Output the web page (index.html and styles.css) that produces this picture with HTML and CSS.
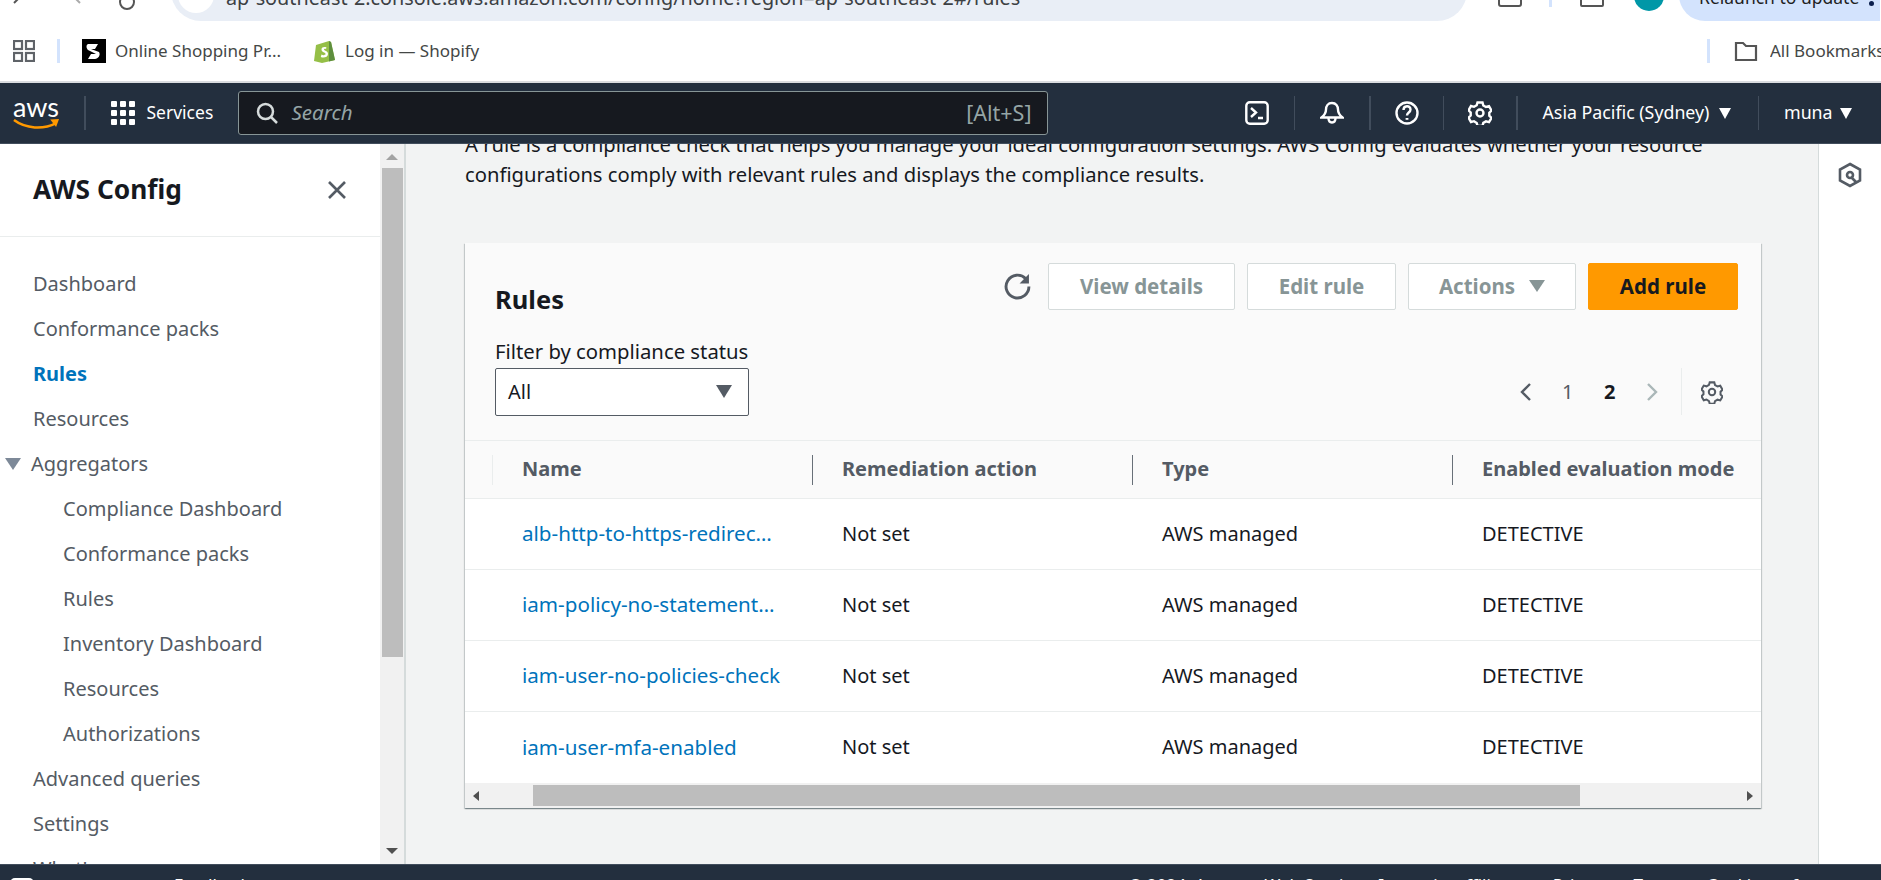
FILE: index.html
```html
<!DOCTYPE html>
<html lang="en">
<head>
<meta charset="utf-8">
<title>Rules | AWS Config</title>
<link rel="stylesheet" href="styles.css">
</head>
<body>
<div class="page">
  <div class="browser-top">
    <div class="tb-left">
      <svg class="tb-ic back" viewBox="0 0 20 20"><path d="M12 2 4 10"/></svg>
      <svg class="tb-ic fwd" viewBox="0 0 20 20"><path d="M8 2l8 8"/></svg>
      <svg class="tb-ic reload" viewBox="0 0 20 20"><circle cx="10" cy="6" r="7"/></svg>
    </div>
    <div class="url-bar">
      <span class="url-lock"></span>
      <span class="url-text">ap-southeast-2.console.aws.amazon.com/config/home?region=ap-southeast-2#/rules</span>
      <svg class="url-star" viewBox="0 0 20 20"><path d="M10 -6l3 8h8l-6 5 2 7-7-4-7 4 2-7-6-5h8z"/></svg>
    </div>
    <div class="tb-right">
      <span class="tb-box"></span>
      <span class="tb-sep"></span>
      <span class="tb-box dl"></span>
      <span class="avatar">m</span>
      <div class="update-pill"><span class="update-text">Relaunch to update</span><span class="dot"></span></div>
    </div>
  </div>

  <div class="bookmarks">
    <svg class="apps" viewBox="0 0 22 22"><rect x="1" y="1" width="8" height="8"/><rect x="13" y="1" width="8" height="8"/><rect x="1" y="13" width="8" height="8"/><rect x="13" y="13" width="8" height="8"/></svg>
    <span class="bm-sep"></span>
    <div class="bm bm-online">
      <svg class="fav" viewBox="0 0 24 24"><rect width="24" height="24" fill="#000"/><path d="M6 5h10l-3 5H9l8 3c2 3-1 7-4 7H6l3-5h5L6 11C4 9 4 6 6 5z" fill="#fff"/></svg>
      <span class="bm-label">Online Shopping Pr...</span>
    </div>
    <div class="bm">
      <svg class="fav shop" viewBox="0 0 22 24"><path d="M2 6 15 2l2 1 4 18-13 3-8-2z" fill="#95bf47"/><path d="M15 2l2 1 4 18-6 1.500z" fill="#5e8e3e"/><path d="M12.500 8.500c-2-1-5-.5-5 2 0 3 4 2.500 4 4.500 0 1.500-2.500 1.500-4 .5l-.7 2.500c2.500 1.300 7.200.5 7.200-3 0-3.300-4-3-4-4.500 0-1 1.300-1 2-.6z" fill="#fff"/></svg>
      <span class="bm-text">Log in — Shopify</span>
    </div>
    <span class="bm-spacer"></span>
    <span class="bm-sep"></span>
    <svg class="folder" viewBox="0 0 24 22"><path d="M2 3h7l3 3h10v14H2z"/></svg>
    <span class="bm all">All Bookmarks</span>
  </div>

  <header class="topnav">
    <div class="aws-logo">
      <span class="aws-word">aws</span>
      <svg class="aws-smile" viewBox="0 0 48 12"><path d="M1 2c12 9 30 10 43 3" fill="none" stroke="#f90" stroke-width="2.600"/><path d="M38 1.500l9-.5-3 8z" fill="#f90"/></svg>
    </div>
    <span class="nav-sep logo-sep"></span>
    <svg class="grid-ic" viewBox="0 0 24 24"><g fill="#fff"><rect width="6" height="6" rx="1"/><rect x="9" width="6" height="6" rx="1"/><rect x="18" width="6" height="6" rx="1"/><rect y="9" width="6" height="6" rx="1"/><rect x="9" y="9" width="6" height="6" rx="1"/><rect x="18" y="9" width="6" height="6" rx="1"/><rect y="18" width="6" height="6" rx="1"/><rect x="9" y="18" width="6" height="6" rx="1"/><rect x="18" y="18" width="6" height="6" rx="1"/></g></svg>
    <span class="services">Services</span>
    <div class="search">
      <svg class="search-ic" viewBox="0 0 22 22"><circle cx="9.500" cy="9.500" r="7.500"/><path d="m15 15 6 6"/></svg>
      <span class="search-ph">Search</span>
      <span class="search-key">[Alt+S]</span>
    </div>
    <svg class="nav-ic term" viewBox="0 0 24 24"><rect x="1.300" y="1.300" width="21.400" height="21.400" rx="3.500"/><path d="m6 7 5 4.500L6 16M13 17h5"/></svg>
    <span class="nav-sep s1"></span>
    <svg class="nav-ic bell" viewBox="0 0 24 24"><path d="M12 2c-4 0-6 3-6 6.500 0 3.500-2 6-4.500 8h21C20 14.500 18 12 18 8.500 18 5 16 2 12 2z"/><path d="M8.500 17c0 6 7 6 7 0"/></svg>
    <span class="nav-sep s2"></span>
    <svg class="nav-ic help" viewBox="0 0 24 24"><circle cx="12" cy="12" r="10.500"/><path d="M8.500 9c0-5 7-5 7-.5 0 3-3.500 3-3.500 6"/><path class="fat" d="M12 17v1.800"/></svg>
    <span class="nav-sep s3"></span>
    <svg class="nav-ic gear" viewBox="0 0 24 24"><circle cx="12" cy="12" r="3.500"/><path d="M9.500 1.500h5l.8 3 2.700 1.500 3-.8 2.500 4.300-2.200 2.200v3l2.200 2.200-2.500 4.300-3-.8-2.700 1.500-.8 3h-5l-.8-3L6 20.200l-3 .8L.500 16.700 2.700 14.500v-3L.500 9.300 3 5l3 .8 2.700-1.500z"/></svg>
    <span class="nav-sep s4"></span>
    <span class="region">Asia Pacific (Sydney)</span>
    <span class="tri white t1"></span>
    <span class="nav-sep s5"></span>
    <span class="user">muna</span>
    <span class="tri white t2"></span>
  </header>

  <div class="workspace">
    <aside class="side">
      <div class="side-scroll">
        <div class="side-head">
          <h2 class="side-title">AWS Config</h2>
          <svg class="close" viewBox="0 0 20 20"><path d="m2 2 16 16M18 2 2 18"/></svg>
        </div>
        <nav class="side-nav">
          <a class="item">Dashboard</a>
          <a class="item">Conformance packs</a>
          <a class="item active">Rules</a>
          <a class="item">Resources</a>
          <a class="item group"><span class="tri grey"></span>Aggregators</a>
          <a class="item sub">Compliance Dashboard</a>
          <a class="item sub">Conformance packs</a>
          <a class="item sub">Rules</a>
          <a class="item sub">Inventory Dashboard</a>
          <a class="item sub">Resources</a>
          <a class="item sub">Authorizations</a>
          <a class="item">Advanced queries</a>
          <a class="item">Settings</a>
          <a class="item">What's new</a>
        </nav>
      </div>
      <div class="vscroll">
        <span class="arrow up"></span>
        <span class="vthumb"></span>
        <span class="arrow down"></span>
      </div>
    </aside>

    <main class="main">
      <p class="intro">A rule is a compliance check that helps you manage your ideal configuration settings. AWS Config evaluates whether your resource configurations comply with relevant rules and displays the compliance results.</p>

      <section class="card">
        <div class="card-head">
          <div class="head-row">
            <h2 class="card-title">Rules</h2>
            <div class="actions">
              <svg class="refresh" viewBox="0 0 26 26"><path d="M21 5.500A11 11 0 1 0 24 13"/><path class="fill" d="M24 1v9h-9z"/></svg>
              <button class="btn b-view">View details</button>
              <button class="btn b-edit">Edit rule</button>
              <button class="btn b-actions">Actions <span class="tri disabled"></span></button>
              <button class="btn primary">Add rule</button>
            </div>
          </div>
          <div class="filter-row">
            <div class="filter">
              <label class="filter-label">Filter by compliance status</label>
              <div class="select">All<span class="tri dark"></span></div>
            </div>
            <div class="pager">
              <svg class="chev" viewBox="0 0 12 20"><path d="M10 2 2 10l8 8"/></svg>
              <span class="pg">1</span>
              <span class="pg cur">2</span>
              <svg class="chev off" viewBox="0 0 12 20"><path d="m2 2 8 8-8 8"/></svg>
              <span class="pg-sep"></span>
              <svg class="pref" viewBox="0 0 24 24"><circle cx="12" cy="12" r="3.500"/><path d="M9.500 1.500h5l.8 3 2.700 1.500 3-.8 2.500 4.300-2.200 2.200v3l2.200 2.200-2.500 4.300-3-.8-2.700 1.500-.8 3h-5l-.8-3L6 20.200l-3 .8L.500 16.700 2.700 14.500v-3L.500 9.300 3 5l3 .8 2.700-1.500z"/></svg>
            </div>
          </div>
        </div>

        <div class="table">
          <div class="row th">
            <div class="cell first">Name</div>
            <div class="cell">Remediation action</div>
            <div class="cell">Type</div>
            <div class="cell">Enabled evaluation mode</div>
          </div>
          <div class="row">
            <div class="cell"><a class="link">alb-http-to-https-redirec…</a></div>
            <div class="cell">Not set</div><div class="cell">AWS managed</div><div class="cell">DETECTIVE</div>
          </div>
          <div class="row">
            <div class="cell"><a class="link">iam-policy-no-statement…</a></div>
            <div class="cell">Not set</div><div class="cell">AWS managed</div><div class="cell">DETECTIVE</div>
          </div>
          <div class="row">
            <div class="cell"><a class="link">iam-user-no-policies-check</a></div>
            <div class="cell">Not set</div><div class="cell">AWS managed</div><div class="cell">DETECTIVE</div>
          </div>
          <div class="row">
            <div class="cell"><a class="link">iam-user-mfa-enabled</a></div>
            <div class="cell">Not set</div><div class="cell">AWS managed</div><div class="cell">DETECTIVE</div>
          </div>
        </div>

        <div class="hscroll">
          <span class="harrow left"></span>
          <span class="htrack"><span class="hthumb"></span></span>
          <span class="harrow right"></span>
        </div>
      </section>
    </main>

    <aside class="tools">
      <svg class="tools-ic" viewBox="0 0 24 26"><path d="M12 2 22 7.500v11L12 24 2 18.500v-11z"/><circle cx="12" cy="13" r="3"/><path d="m13 15 5 5"/></svg>
    </aside>
  </div>

  <footer class="footer">
    <svg class="fb-ic" viewBox="0 0 26 20"><rect x="2" y="2" width="22" height="20" rx="4"/></svg>
    <span class="ft-link ft-feedback">Feedback</span>
    <span class="ft-spacer"></span>
    <span class="ft-text">© 2024, Amazon Web Services, Inc. or its affiliates.</span>
    <span class="ft-link">Privacy</span>
    <span class="ft-link">Terms</span>
    <span class="ft-link">Cookie preferences</span>
  </footer>
</div>
</body>
</html>
```

FILE: styles.css
```css
* { box-sizing: border-box; }
html, body { margin: 0; padding: 0; height: 100%; }
body { overflow: hidden; background: #fff; font-family: "Noto Sans", "Open Sans", sans-serif; font-size: 20px; color: #16191f; }
.page { width: 1881px; height: 880px; display: flex; flex-direction: column; overflow: hidden; }

/* browser chrome */
.browser-top { height: 21px; flex: none; display: flex; align-items: flex-end; overflow: hidden; background: #fff; }
.tb-left { width: 171px; height: 21px; flex: none; display: flex; overflow: hidden; padding-left: 8px; }
.tb-ic { width: 20px; height: 20px; flex: none; fill: none; stroke: #555; stroke-width: 2; }
.back { margin-left: 2px; margin-top: -7px; }
.fwd { margin-left: 34px; margin-top: -7px; stroke: #aaa; }
.reload { margin-left: 33px; margin-top: -4px; }
.url-bar { width: 1296px; height: 60px; flex: none; display: flex; align-items: flex-end; background: #e9eef6; border-radius: 0 0 30px 30px; padding: 0 0 11px 7px; line-height: 24px; }
.url-lock { width: 36px; height: 36px; flex: none; border-radius: 50%; background: #fff; margin-bottom: -3px; }
.url-text { margin-left: 12px; font-family: "Noto Sans", sans-serif; font-size: 19.800px; color: #3c4043; white-space: nowrap; flex: 1; }
.url-star { width: 22px; height: 20px; flex: none; fill: #444; margin: 0 22px 5px 0; }
.tb-right { flex: 1; height: 21px; display: flex; align-items: flex-end; overflow: hidden; }
.tb-box { width: 24px; height: 24px; flex: none; border: 2.500px solid #555; border-radius: 3px; margin: 0 0 14px 31px; }
.tb-sep { width: 3px; height: 10px; flex: none; background: #d3e3fd; margin: 0 0 14px 27px; }
.tb-box.dl { margin-left: 28px; border-radius: 2px; }
.avatar { width: 30px; height: 30px; flex: none; margin: 0 0 10px 30px; border-radius: 50%; background: #0097a7; color: #fff; font-size: 15px; line-height: 22px; text-align: center; }
.update-pill { width: 201px; height: 50px; margin-left: 15px; flex: none; display: flex; align-items: flex-end; background: #d3e3fd; border-radius: 0 0 0 26px; padding: 0 6px 12px 20px; }
.update-text { flex: 1; font-family: "Noto Sans", sans-serif; font-size: 17.500px; line-height: 24px; color: #1f1f1f; white-space: nowrap; }
.dot { width: 5px; height: 5px; border-radius: 50%; background: #0b1f4d; flex: none; margin-bottom: 3px; }

.bookmarks { height: 62px; flex: none; display: flex; align-items: center; padding: 0 0 0 13px; background: #fff; border-bottom: 2px solid #dadce0; font-family: "Noto Sans", sans-serif; font-size: 17px; color: #444746; }
.apps { width: 22px; height: 22px; flex: none; fill: none; stroke: #5f6368; stroke-width: 2.200; }
.bm-sep { width: 3px; height: 24px; flex: none; background: #d3e3fd; margin-left: 22px; }
.bm { display: flex; align-items: center; gap: 9px; white-space: nowrap; color: #444746; }
.bm-sep + .bm { margin-left: 22px; }
.bm-label { width: 168px; overflow: hidden; flex: none; padding-bottom: 2px; }
.bm-text { padding-bottom: 2px; }
.bm + .bm { margin-left: 31px; }
.fav { width: 24px; height: 24px; flex: none; }
.shop { width: 22px; }
.bm-spacer { flex: 1; }
.folder { width: 24px; height: 22px; flex: none; fill: none; stroke: #555; stroke-width: 2.200; margin-left: 24px; }
.bm.all { margin-left: 12px; width: 111px; overflow: hidden; flex: none; padding-bottom: 2px; }

/* aws bar */
.topnav { height: 61px; flex: none; display: flex; align-items: center; background: #232f3e; color: #fff; padding-left: 12px; border-bottom: 1px solid #414d5c; }
.aws-logo { width: 48px; height: 34px; flex: none; display: flex; flex-direction: column; align-items: center; }
.aws-word { font-family: "Lato", sans-serif; font-size: 27px; line-height: 22px; color: #fff; }
.aws-smile { width: 47px; height: 12px; flex: none; }
.nav-sep { width: 1.500px; height: 34px; flex: none; background: #414d5c; }
.logo-sep { margin-left: 24px; }
.grid-ic { width: 24px; height: 24px; flex: none; margin-left: 25px; }
.services { margin-left: 12px; font-size: 17.500px; width: 91px; flex: none; white-space: nowrap; padding-bottom: 2px; }
.search { width: 810px; height: 44px; flex: none; display: flex; align-items: center; background: #16191f; border: 1px solid #879596; border-radius: 3px; padding: 0 15px 0 17px; }
.search-ic { width: 22px; height: 22px; flex: none; fill: none; stroke: #d5dbdb; stroke-width: 2.500; }
.search-ph { margin-left: 14px; flex: 1; font-style: italic; color: #95a5a6; font-size: 20.500px; padding-bottom: 2px; }
.search-key { color: #95a5a6; font-size: 21.500px; padding-bottom: 2px; }
.nav-ic { width: 24px; height: 24px; flex: none; fill: none; stroke: #fff; stroke-width: 2.400; }
.nav-ic .fat { stroke-width: 2.800; }
.term { margin-left: 197px; }
.s1 { margin-left: 25px; }
.bell { margin-left: 25px; }
.s2 { margin-left: 25px; }
.help { margin-left: 24px; }
.s3 { margin-left: 24px; }
.gear { margin-left: 24px; }
.s4 { margin-left: 24px; }
.region { margin-left: 25px; width: 168px; flex: none; white-space: nowrap; font-size: 17.800px; padding-bottom: 2px; }
.tri { display: inline-block; width: 0; height: 0; border-left: 6.500px solid transparent; border-right: 6.500px solid transparent; border-top: 11px solid #fff; flex: none; }
.t1 { margin-left: 8px; }
.s5 { margin-left: 27px; }
.user { margin-left: 25px; width: 47px; flex: none; font-size: 17.800px; padding-bottom: 2px; }
.t2 { margin-left: 9px; }

/* layout */
.workspace { height: 720px; flex: none; display: flex; overflow: hidden; }
.side { width: 406px; flex: none; display: flex; border-right: 2px solid #d5dbdb; background: #fff; overflow: hidden; }
.side-scroll { width: 380px; flex: none; height: 720px; overflow: hidden; }
.side-head { height: 93px; display: flex; align-items: center; justify-content: space-between; padding: 0 33px 0 33px; border-bottom: 1px solid #eaeded; }
.side-title { margin: 0 0 2px; font-size: 26.300px; line-height: 30px; font-weight: 700; }
.close { width: 20px; height: 20px; fill: none; stroke: #545b64; stroke-width: 2.600; }
.side-nav { padding-top: 24px; display: flex; flex-direction: column; }
.item { display: flex; align-items: center; height: 45px; flex: none; padding-left: 33px; color: #545b64; white-space: nowrap; }
.item.active { color: #0073bb; font-weight: 700; }
.item.sub { padding-left: 63px; }
.item.group { padding-left: 5px; }
.tri.grey { border-left-width: 8px; border-right-width: 8px; border-top: 12px solid #7d8998; margin-right: 10px; }
.vscroll { width: 24px; flex: none; display: flex; flex-direction: column; align-items: center; background: #f1f1f1; padding-top: 10px; padding-bottom: 10px; }
.arrow { width: 0; height: 0; border-left: 6px solid transparent; border-right: 6px solid transparent; flex: none; }
.arrow.up { border-bottom: 6px solid #a3a3a3; }
.arrow.down { border-top: 6px solid #505050; margin-top: auto; }
.vthumb { width: 21px; height: 489px; background: #bdbdbd; margin-top: 8px; flex: none; }

.main { width: 1412px; flex: none; background: #f2f3f3; padding: 0 57px 0 59px; overflow: hidden; }
.intro { margin: -15px 0 0; line-height: 30px; height: 60px; color: #16191f; width: 1296px; font-size: 20.200px; }
.card { margin-top: 54px; width: 1296px; height: 565px; background: #fff; box-shadow: 0 1px 1px 0 rgba(0,28,36,.3), 1px 1px 1px 0 rgba(0,28,36,.15), -1px 1px 1px 0 rgba(0,28,36,.15); display: flex; flex-direction: column; overflow: hidden; }
.card-head { height: 198px; flex: none; background: #fafafa; border-bottom: 1px solid #eaeded; padding: 20px 23px 0 30px; }
.head-row { display: flex; align-items: flex-start; justify-content: space-between; height: 75px; }
.card-title { margin: 19px 0 0; font-size: 25.500px; line-height: 34px; font-weight: 700; }
.actions { display: flex; align-items: center; gap: 12px; }
.refresh { width: 27px; height: 27px; flex: none; fill: none; stroke: #545b64; stroke-width: 2.800; margin-right: 5px; }
.refresh .fill { fill: #545b64; stroke: none; }
.btn { height: 47px; border: 1px solid #d5dbdb; background: #fff; border-radius: 2px; font: 700 20.500px "Noto Sans", sans-serif; color: #879596; display: flex; align-items: center; justify-content: center; padding: 0 0 2px; white-space: nowrap; }
.b-view { width: 187px; }
.b-edit { width: 149px; }
.b-actions { width: 168px; gap: 14px; }
.tri.disabled { border-left-width: 8px; border-right-width: 8px; border-top: 12px solid #879596; }
.btn.primary { width: 150px; background: #f90; border-color: #f90; color: #16191f; }
.filter-row { display: flex; justify-content: space-between; align-items: flex-end; }
.filter { width: 254px; }
.filter-label { display: block; line-height: 26px; height: 27px; white-space: nowrap; font-size: 20.300px; }
.select { height: 48px; margin-top: 3px; display: flex; align-items: center; justify-content: space-between; background: #fff; border: 1px solid #545b64; border-radius: 2px; padding: 0 16px 2px 12px; }
.tri.dark { border-left-width: 8px; border-right-width: 8px; border-top: 13px solid #545b64; }
.pager { display: flex; align-items: center; height: 47px; margin: 0 15px 1px 0; }
.chev { width: 12px; height: 20px; flex: none; fill: none; stroke: #545b64; stroke-width: 2.400; }
.chev.off { stroke: #aab7b8; margin-left: 31px; }
.pg { width: 11px; color: #545b64; text-align: center; margin-left: 30px; }
.pg.cur { color: #16191f; font-weight: 700; margin-left: 31px; }
.pg-sep { width: 1px; height: 47px; background: #eaeded; flex: none; margin-left: 23px; }
.pref { width: 22px; height: 24px; flex: none; margin-left: 19px; fill: none; stroke: #545b64; stroke-width: 2.200; }

.table { flex: none; height: 342px; overflow: hidden; }
.row { display: grid; grid-template-columns: repeat(4, 320px); padding-left: 27px; height: 71px; background: #fff; border-bottom: 1px solid #eaeded; align-items: center; width: 1400px; }
.row .cell { padding: 0 26px 2px 30px; white-space: nowrap; }
.row.th { height: 58px; background: #fafafa; font-weight: 700; color: #545b64; }
.row.th .cell { height: 30px; line-height: 28px; padding-left: 29px; border-left: 1px solid #687078; }
.row.th .cell.first { border-left-color: #eaeded; }
.row:last-child { border-bottom: 0; }
.link { display: block; color: #0073bb; font-size: 20.600px; }

.hscroll { height: 25px; flex: none; background: #f1f1f1; display: flex; align-items: center; padding: 0 8px; }
.htrack { flex: 1; height: 21px; padding-left: 54px; display: flex; }
.hthumb { width: 1047px; height: 21px; background: #bdbdbd; flex: none; }
.harrow { width: 0; height: 0; border-top: 5px solid transparent; border-bottom: 5px solid transparent; flex: none; }
.harrow.left { border-right: 6px solid #505050; }
.harrow.right { border-left: 6px solid #505050; }

.tools { width: 63px; flex: none; background: #fff; border-left: 1px solid #d5dbdb; display: flex; align-items: flex-start; justify-content: center; padding-top: 18px; }
.tools-ic { width: 24px; height: 26px; flex: none; fill: none; stroke: #545b64; stroke-width: 2.600; }

.footer { height: 16px; flex: none; display: flex; align-items: flex-start; gap: 24px; background: #232f3e; color: #fff; padding: 10px 21px 0 9px; overflow: hidden; font-size: 17px; line-height: 20px; white-space: nowrap; border-top: 1px solid #414d5c; }
.fb-ic { width: 26px; height: 20px; flex: none; fill: none; stroke: #fff; stroke-width: 2; margin-top: 2px; }
.ft-feedback { margin-left: 115px; }
.ft-spacer { flex: 1; }
```
